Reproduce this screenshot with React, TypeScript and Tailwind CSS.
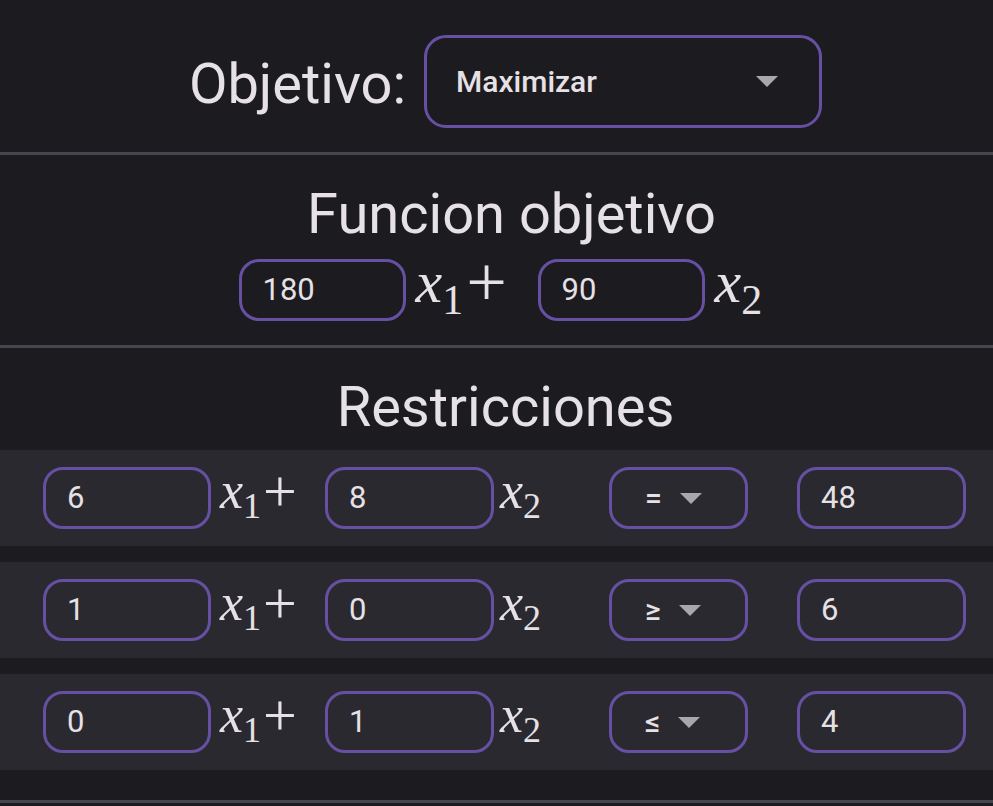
import { useState } from "react";

const rows = [
  { a: "6", b: "8", op: "=", rhs: "48" },
  { a: "1", b: "0", op: "≥", rhs: "6" },
  { a: "0", b: "1", op: "≤", rhs: "4" },
];

function Caret() {
  return (
    <svg width="22" height="11" viewBox="0 0 22 11" className="shrink-0">
      <polygon points="0,0 22,0 11,11" fill="#a9a6ad" />
    </svg>
  );
}

function Field({ value, w }: { value: string; w: string }) {
  const [v, setV] = useState(value);
  return (
    <div
      className={`${w} h-[62px] shrink-0 rounded-[20px] border-[3px] border-[#6750a4] flex items-center pl-[21px] pr-2`}
    >
      <input
        value={v}
        onChange={(e) => setV(e.target.value)}
        className="w-full bg-transparent text-[31px] text-[#e6e1e5] outline-none"
      />
    </div>
  );
}

// x with subscript, in the serif used for formulas
function Xi({ i, size }: { i: number; size: "lg" | "sm" }) {
  const big = size === "lg";
  return (
    <span className="flex items-baseline whitespace-nowrap text-[#e6e1e5]">
      <span
        className={`font-['Liberation_Serif',serif] italic ${big ? "text-[60px]" : "text-[52px]"} leading-none`}
      >
        x
      </span>
      <span
        className={`font-['Liberation_Serif',serif] ${
          big ? "text-[42px] translate-y-[12px]" : "text-[36px] translate-y-[10px]"
        } leading-none`}
      >
        {i}
      </span>
    </span>
  );
}

function Plus({ size }: { size: "lg" | "sm" }) {
  return (
    <span
      className={`font-['Liberation_Serif',serif] leading-none text-[#e6e1e5] ${
        size === "lg" ? "text-[72px] ml-[3px]" : "text-[60px] ml-[2px]"
      }`}
    >
      +
    </span>
  );
}

export default function App() {
  return (
    <div className="min-h-screen w-full bg-[#1c1b1f] font-['Roboto',sans-serif] text-[#e6e1e5]">
      {/* objective type */}
      <div className="flex items-center justify-center gap-[18px] pl-[18px] pt-[35px]">
        <span className="mt-[4px] text-[56px] leading-[66px]">Objetivo:</span>
        <div className="flex h-[93px] w-[398px] items-center justify-between rounded-[22px] border-[3px] border-[#6750a4] pl-[29px] pr-[41px]">
          <span className="text-[30px] font-medium">Maximizar</span>
          <Caret />
        </div>
      </div>

      <div className="mt-[24px] h-[3px] bg-[#49454f]" />

      {/* objective function */}
      <div className="mt-[26px] pl-[30px] text-center text-[56px] leading-[66px]">
        Funcion objetivo
      </div>
      <div className="mt-[12px] flex h-[62px] items-center justify-center pl-[18px]">
        <Field value="180" w="w-[167px]" />
        <div className="flex h-[62px] w-[132px] items-center pb-[16px] pl-[10px]">
          <Xi i={1} size="lg" />
          <Plus size="lg" />
        </div>
        <Field value="90" w="w-[167px]" />
        <div className="flex h-[62px] w-[68px] items-center pb-[16px] pl-[10px]">
          <Xi i={2} size="lg" />
        </div>
      </div>

      <div className="mt-[24px] h-[3px] bg-[#49454f]" />

      {/* constraints */}
      <div className="mt-[26px] pl-[18px] text-center text-[56px] leading-[66px]">
        Restricciones
      </div>
      <div className="mt-[10px] flex flex-col gap-[16px]">
        {rows.map((r, k) => (
          <div key={k} className="flex h-[96px] items-center bg-[#2b2930] pl-[43px]">
            <Field value={r.a} w="w-[168px]" />
            <div className="flex h-[62px] w-[114px] items-center pb-[14px] pl-[9px]">
              <Xi i={1} size="sm" />
              <Plus size="sm" />
            </div>
            <Field value={r.b} w="w-[169px]" />
            <div className="flex h-[62px] w-[115px] items-center pb-[14px] pl-[6px]">
              <Xi i={2} size="sm" />
            </div>
            <div className="flex h-[62px] w-[139px] shrink-0 items-center gap-[18px] rounded-[20px] border-[3px] border-[#6750a4] pl-[33px]">
              <span className="text-[30px] font-medium leading-none">{r.op}</span>
              <Caret />
            </div>
            <div className="w-[49px] shrink-0" />
            <Field value={r.rhs} w="w-[169px]" />
          </div>
        ))}
      </div>

      <div className="mt-[30px] h-[3px] bg-[#49454f]" />
    </div>
  );
}
